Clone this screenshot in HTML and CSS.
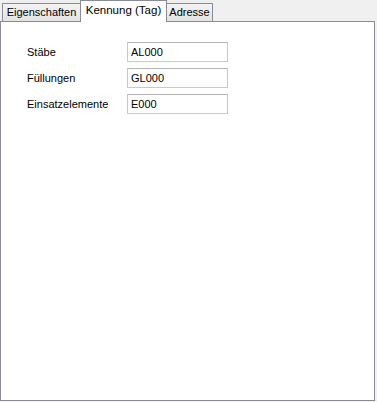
FILE: index.html
```html
<!DOCTYPE html>
<html lang="de">
<head>
    <meta charset="UTF-8">
    <title>Kennung (Tag)</title>
    <link rel="stylesheet" href="styles.css">
</head>
<body>
    <div class="tabs">
        <div class="tab first">Eigenschaften</div>
        <div class="tab active">Kennung (Tag)</div>
        <div class="tab last">Adresse</div>
    </div>
    <div class="panel">
        <div class="form">
            <label>Stäbe</label>
            <input type="text" value="AL000">
            <label>Füllungen</label>
            <input type="text" value="GL000">
            <label>Einsatzelemente</label>
            <input type="text" value="E000">
        </div>
    </div>
</body>
</html>
```

FILE: styles.css
```css
body {
    margin: 0;
    background-color: #f0f0f0;
    font-family: 'Liberation Sans', Arial, sans-serif;
    font-size: 11px;
    color: #000;
}
.tabs {
    display: flex;
    align-items: flex-end;
    height: 21px;
    padding-left: 2px;
}
.tab {
    box-sizing: border-box;
    height: 18px;
    line-height: 17px;
    text-align: center;
    border: 1px solid #898c95;
    border-bottom: none;
    background: linear-gradient(#f3f3f3, #e3e3e3);
    margin-left: -1px;
}
.tab.first {
    width: 79px;
    margin-left: 0;
}
.tab.last {
    width: 47px;
}
.tab.active {
    position: relative;
    z-index: 1;
    width: 87px;
    height: 22px;
    line-height: 18px;
    margin-bottom: -1px;
    background: #fff;
    font-size: 11.5px;
}
.panel {
    height: 378px;
    margin-right: 2px;
    border: 1px solid #898c95;
    background-color: #fff;
}
.form {
    display: grid;
    grid-template-columns: 100px 101px;
    row-gap: 6px;
    align-items: center;
    padding: 20px 0 0 26px;
}
.form input {
    box-sizing: border-box;
    width: 101px;
    height: 20px;
    margin: 0;
    padding: 0 3px;
    border: 1px solid #c9c9c9;
    border-top-color: #b4b4b4;
    font-family: 'Liberation Sans', Arial, sans-serif;
    font-size: 11px;
    color: #000;
    outline: none;
}
```
